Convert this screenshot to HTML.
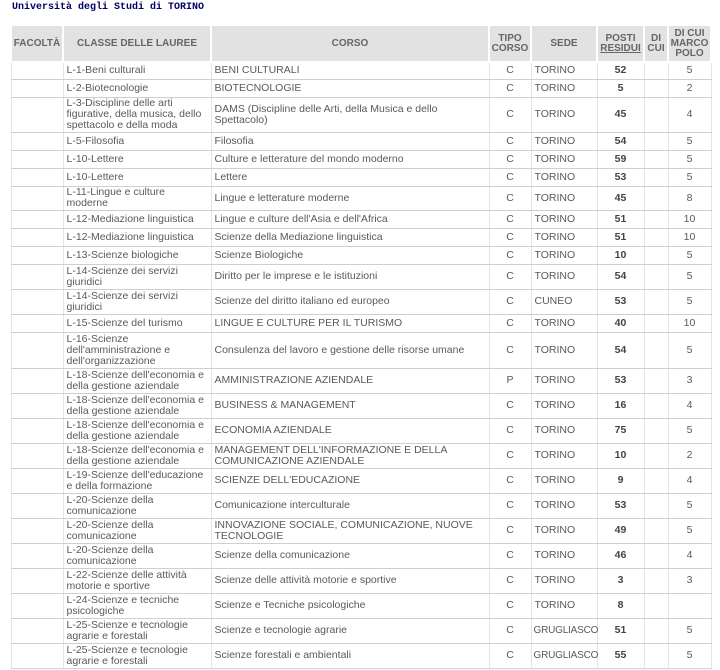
<!DOCTYPE html>
<html><head><meta charset="utf-8"><style>
body{margin:0;background:#fff;width:720px;height:670px;overflow:hidden;font-family:"Liberation Sans",Tahoma,sans-serif;}
.t{position:absolute;left:12px;top:2px;font:bold 10px "Liberation Mono",monospace;color:#000066;}
table{position:absolute;left:10px;top:24px;border-collapse:collapse;width:700px;table-layout:fixed;}
th{background:#e2e2e2;color:#666;font-size:10px;font-weight:bold;line-height:10px;border:2px solid #fff;padding:0;height:35px;text-align:center;}
td{font-size:10.5px;color:#5a5a5a;line-height:11px;border-left:1px solid #e4e4e4;border-right:1px solid #e4e4e4;border-bottom:1px solid #cfcfcf;padding:0 0 0 3px;white-space:nowrap;overflow:visible;}
td.c{text-align:center;padding:0}
td.s{font-size:10px;padding-left:2px;letter-spacing:-0.2px}
td.b{text-align:center;padding:0;font-weight:bold;color:#444}
</style></head><body>
<div class="t">Università degli Studi di TORINO</div>
<table>
<colgroup><col style="width:52px"><col style="width:148px"><col style="width:278px"><col style="width:42px"><col style="width:66px"><col style="width:47px"><col style="width:24px"><col style="width:43px"></colgroup>
<tr><th>FACOLTÀ</th><th>CLASSE DELLE LAUREE</th><th>CORSO</th><th>TIPO<br>CORSO</th><th>SEDE</th><th>POSTI<br><u>RESIDUI</u></th><th>DI<br>CUI</th><th>DI CUI<br>MARCO<br>POLO</th></tr>
<tr style="height:17px"><td></td><td>L-1-Beni culturali</td><td>BENI CULTURALI</td><td class="c">C</td><td>TORINO</td><td class="b">52</td><td></td><td class="c">5</td></tr>
<tr style="height:18px"><td></td><td>L-2-Biotecnologie</td><td>BIOTECNOLOGIE</td><td class="c">C</td><td>TORINO</td><td class="b">5</td><td></td><td class="c">2</td></tr>
<tr style="height:35px"><td></td><td>L-3-Discipline delle arti<br>figurative, della musica, dello<br>spettacolo e della moda</td><td>DAMS (Discipline delle Arti, della Musica e dello<br>Spettacolo)</td><td class="c">C</td><td>TORINO</td><td class="b">45</td><td></td><td class="c">4</td></tr>
<tr style="height:18px"><td></td><td>L-5-Filosofia</td><td>Filosofia</td><td class="c">C</td><td>TORINO</td><td class="b">54</td><td></td><td class="c">5</td></tr>
<tr style="height:18px"><td></td><td>L-10-Lettere</td><td>Culture e letterature del mondo moderno</td><td class="c">C</td><td>TORINO</td><td class="b">59</td><td></td><td class="c">5</td></tr>
<tr style="height:18px"><td></td><td>L-10-Lettere</td><td>Lettere</td><td class="c">C</td><td>TORINO</td><td class="b">53</td><td></td><td class="c">5</td></tr>
<tr style="height:24px"><td></td><td>L-11-Lingue e culture<br>moderne</td><td>Lingue e letterature moderne</td><td class="c">C</td><td>TORINO</td><td class="b">45</td><td></td><td class="c">8</td></tr>
<tr style="height:18px"><td></td><td>L-12-Mediazione linguistica</td><td>Lingue e culture dell'Asia e dell'Africa</td><td class="c">C</td><td>TORINO</td><td class="b">51</td><td></td><td class="c">10</td></tr>
<tr style="height:18px"><td></td><td>L-12-Mediazione linguistica</td><td>Scienze della Mediazione linguistica</td><td class="c">C</td><td>TORINO</td><td class="b">51</td><td></td><td class="c">10</td></tr>
<tr style="height:18px"><td></td><td>L-13-Scienze biologiche</td><td>Scienze Biologiche</td><td class="c">C</td><td>TORINO</td><td class="b">10</td><td></td><td class="c">5</td></tr>
<tr style="height:25px"><td></td><td>L-14-Scienze dei servizi<br>giuridici</td><td>Diritto per le imprese e le istituzioni</td><td class="c">C</td><td>TORINO</td><td class="b">54</td><td></td><td class="c">5</td></tr>
<tr style="height:25px"><td></td><td>L-14-Scienze dei servizi<br>giuridici</td><td>Scienze del diritto italiano ed europeo</td><td class="c">C</td><td>CUNEO</td><td class="b">53</td><td></td><td class="c">5</td></tr>
<tr style="height:18px"><td></td><td>L-15-Scienze del turismo</td><td>LINGUE E CULTURE PER IL TURISMO</td><td class="c">C</td><td>TORINO</td><td class="b">40</td><td></td><td class="c">10</td></tr>
<tr style="height:36px"><td></td><td>L-16-Scienze<br>dell'amministrazione e<br>dell'organizzazione</td><td>Consulenza del lavoro e gestione delle risorse umane</td><td class="c">C</td><td>TORINO</td><td class="b">54</td><td></td><td class="c">5</td></tr>
<tr style="height:25px"><td></td><td>L-18-Scienze dell'economia e<br>della gestione aziendale</td><td>AMMINISTRAZIONE AZIENDALE</td><td class="c">P</td><td>TORINO</td><td class="b">53</td><td></td><td class="c">3</td></tr>
<tr style="height:25px"><td></td><td>L-18-Scienze dell'economia e<br>della gestione aziendale</td><td>BUSINESS &amp; MANAGEMENT</td><td class="c">C</td><td>TORINO</td><td class="b">16</td><td></td><td class="c">4</td></tr>
<tr style="height:25px"><td></td><td>L-18-Scienze dell'economia e<br>della gestione aziendale</td><td>ECONOMIA AZIENDALE</td><td class="c">C</td><td>TORINO</td><td class="b">75</td><td></td><td class="c">5</td></tr>
<tr style="height:25px"><td></td><td>L-18-Scienze dell'economia e<br>della gestione aziendale</td><td>MANAGEMENT DELL'INFORMAZIONE E DELLA<br>COMUNICAZIONE AZIENDALE</td><td class="c">C</td><td>TORINO</td><td class="b">10</td><td></td><td class="c">2</td></tr>
<tr style="height:25px"><td></td><td>L-19-Scienze dell'educazione<br>e della formazione</td><td>SCIENZE DELL'EDUCAZIONE</td><td class="c">C</td><td>TORINO</td><td class="b">9</td><td></td><td class="c">4</td></tr>
<tr style="height:25px"><td></td><td>L-20-Scienze della<br>comunicazione</td><td>Comunicazione interculturale</td><td class="c">C</td><td>TORINO</td><td class="b">53</td><td></td><td class="c">5</td></tr>
<tr style="height:25px"><td></td><td>L-20-Scienze della<br>comunicazione</td><td>INNOVAZIONE SOCIALE, COMUNICAZIONE, NUOVE<br>TECNOLOGIE</td><td class="c">C</td><td>TORINO</td><td class="b">49</td><td></td><td class="c">5</td></tr>
<tr style="height:25px"><td></td><td>L-20-Scienze della<br>comunicazione</td><td>Scienze della comunicazione</td><td class="c">C</td><td>TORINO</td><td class="b">46</td><td></td><td class="c">4</td></tr>
<tr style="height:25px"><td></td><td>L-22-Scienze delle attività<br>motorie e sportive</td><td>Scienze delle attività motorie e sportive</td><td class="c">C</td><td>TORINO</td><td class="b">3</td><td></td><td class="c">3</td></tr>
<tr style="height:25px"><td></td><td>L-24-Scienze e tecniche<br>psicologiche</td><td>Scienze e Tecniche psicologiche</td><td class="c">C</td><td>TORINO</td><td class="b">8</td><td></td><td class="c"></td></tr>
<tr style="height:25px"><td></td><td>L-25-Scienze e tecnologie<br>agrarie e forestali</td><td>Scienze e tecnologie agrarie</td><td class="c">C</td><td class="s">GRUGLIASCO</td><td class="b">51</td><td></td><td class="c">5</td></tr>
<tr style="height:25px"><td></td><td>L-25-Scienze e tecnologie<br>agrarie e forestali</td><td>Scienze forestali e ambientali</td><td class="c">C</td><td class="s">GRUGLIASCO</td><td class="b">55</td><td></td><td class="c">5</td></tr>
</table>
</body></html>
